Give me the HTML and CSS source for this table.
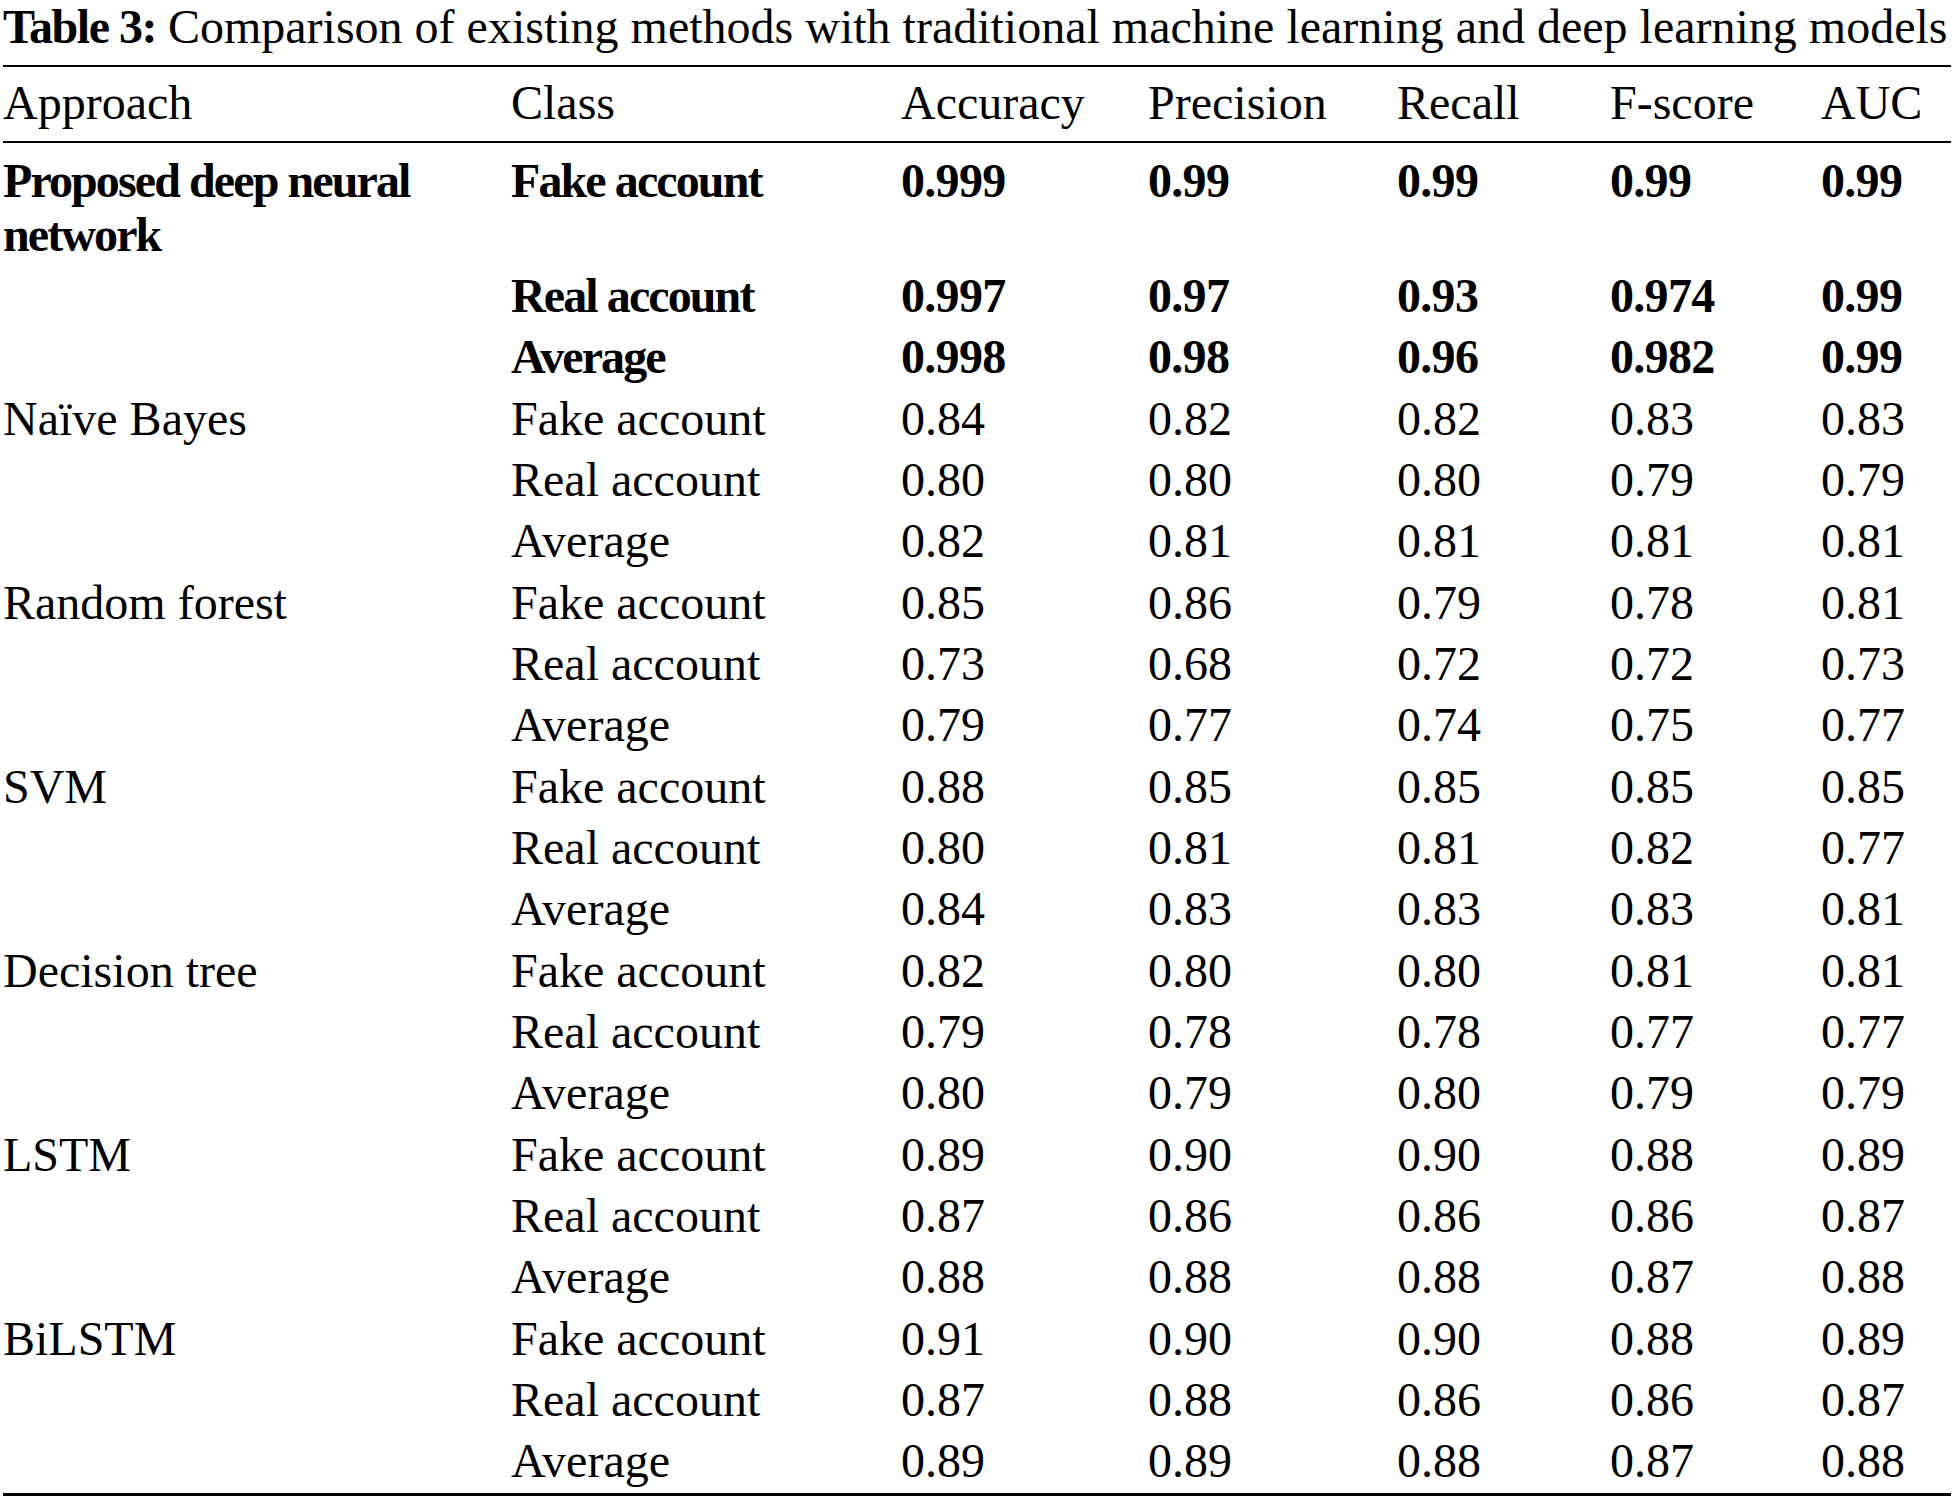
FILE: index.html
```html
<!DOCTYPE html>
<html lang="en">
<head>
<meta charset="utf-8">
<title>Table 3</title>
<link rel="stylesheet" href="styles.css">
</head>
<body>
<div class="page">
  <p class="caption"><span class="caption-label">Table 3:</span> Comparison of existing methods with traditional machine learning and deep learning models</p>
  <table class="results">
    <colgroup>
      <col class="c-approach">
      <col class="c-class">
      <col class="c-acc">
      <col class="c-prec">
      <col class="c-rec">
      <col class="c-f">
      <col class="c-auc">
    </colgroup>
    <thead>
      <tr>
        <th>Approach</th>
        <th>Class</th>
        <th>Accuracy</th>
        <th>Precision</th>
        <th>Recall</th>
        <th>F-score</th>
        <th>AUC</th>
      </tr>
    </thead>
    <tbody>
      <tr class="bold first">
        <td>Proposed deep neural network</td>
        <td>Fake account</td>
        <td>0.999</td>
        <td>0.99</td>
        <td>0.99</td>
        <td>0.99</td>
        <td>0.99</td>
      </tr>
      <tr class="bold">
        <td></td>
        <td>Real account</td>
        <td>0.997</td>
        <td>0.97</td>
        <td>0.93</td>
        <td>0.974</td>
        <td>0.99</td>
      </tr>
      <tr class="bold">
        <td></td>
        <td>Average</td>
        <td>0.998</td>
        <td>0.98</td>
        <td>0.96</td>
        <td>0.982</td>
        <td>0.99</td>
      </tr>
      <tr>
        <td>Naïve Bayes</td>
        <td>Fake account</td>
        <td>0.84</td>
        <td>0.82</td>
        <td>0.82</td>
        <td>0.83</td>
        <td>0.83</td>
      </tr>
      <tr>
        <td></td>
        <td>Real account</td>
        <td>0.80</td>
        <td>0.80</td>
        <td>0.80</td>
        <td>0.79</td>
        <td>0.79</td>
      </tr>
      <tr>
        <td></td>
        <td>Average</td>
        <td>0.82</td>
        <td>0.81</td>
        <td>0.81</td>
        <td>0.81</td>
        <td>0.81</td>
      </tr>
      <tr>
        <td>Random forest</td>
        <td>Fake account</td>
        <td>0.85</td>
        <td>0.86</td>
        <td>0.79</td>
        <td>0.78</td>
        <td>0.81</td>
      </tr>
      <tr>
        <td></td>
        <td>Real account</td>
        <td>0.73</td>
        <td>0.68</td>
        <td>0.72</td>
        <td>0.72</td>
        <td>0.73</td>
      </tr>
      <tr>
        <td></td>
        <td>Average</td>
        <td>0.79</td>
        <td>0.77</td>
        <td>0.74</td>
        <td>0.75</td>
        <td>0.77</td>
      </tr>
      <tr>
        <td>SVM</td>
        <td>Fake account</td>
        <td>0.88</td>
        <td>0.85</td>
        <td>0.85</td>
        <td>0.85</td>
        <td>0.85</td>
      </tr>
      <tr>
        <td></td>
        <td>Real account</td>
        <td>0.80</td>
        <td>0.81</td>
        <td>0.81</td>
        <td>0.82</td>
        <td>0.77</td>
      </tr>
      <tr>
        <td></td>
        <td>Average</td>
        <td>0.84</td>
        <td>0.83</td>
        <td>0.83</td>
        <td>0.83</td>
        <td>0.81</td>
      </tr>
      <tr>
        <td>Decision tree</td>
        <td>Fake account</td>
        <td>0.82</td>
        <td>0.80</td>
        <td>0.80</td>
        <td>0.81</td>
        <td>0.81</td>
      </tr>
      <tr>
        <td></td>
        <td>Real account</td>
        <td>0.79</td>
        <td>0.78</td>
        <td>0.78</td>
        <td>0.77</td>
        <td>0.77</td>
      </tr>
      <tr>
        <td></td>
        <td>Average</td>
        <td>0.80</td>
        <td>0.79</td>
        <td>0.80</td>
        <td>0.79</td>
        <td>0.79</td>
      </tr>
      <tr>
        <td>LSTM</td>
        <td>Fake account</td>
        <td>0.89</td>
        <td>0.90</td>
        <td>0.90</td>
        <td>0.88</td>
        <td>0.89</td>
      </tr>
      <tr>
        <td></td>
        <td>Real account</td>
        <td>0.87</td>
        <td>0.86</td>
        <td>0.86</td>
        <td>0.86</td>
        <td>0.87</td>
      </tr>
      <tr>
        <td></td>
        <td>Average</td>
        <td>0.88</td>
        <td>0.88</td>
        <td>0.88</td>
        <td>0.87</td>
        <td>0.88</td>
      </tr>
      <tr>
        <td>BiLSTM</td>
        <td>Fake account</td>
        <td>0.91</td>
        <td>0.90</td>
        <td>0.90</td>
        <td>0.88</td>
        <td>0.89</td>
      </tr>
      <tr>
        <td></td>
        <td>Real account</td>
        <td>0.87</td>
        <td>0.88</td>
        <td>0.86</td>
        <td>0.86</td>
        <td>0.87</td>
      </tr>
      <tr class="last">
        <td></td>
        <td>Average</td>
        <td>0.89</td>
        <td>0.89</td>
        <td>0.88</td>
        <td>0.87</td>
        <td>0.88</td>
      </tr>
    </tbody>
  </table>
</div>
</body>
</html>
```

FILE: styles.css
```css
html, body {
  margin: 0;
  padding: 0;
  background: #ffffff;
}

body {
  font-family: "Liberation Serif", "Times New Roman", Times, serif;
  font-size: 48px;
  color: #000000;
}

.page {
  padding: 0 3px 0 3px;
}

.caption {
  margin: 0 0 12px 0;
  line-height: 53px;
  white-space: nowrap;
}

.caption-label {
  font-weight: bold;
  letter-spacing: -1.5px;
}

.results {
  width: 100%;
  table-layout: fixed;
  border-collapse: collapse;
  border-top: 2px solid #000;
  border-bottom: 3px solid #000;
}

.c-approach { width: 508px; }
.c-class { width: 390px; }
.c-acc { width: 247px; }
.c-prec { width: 249px; }
.c-rec { width: 213px; }
.c-f { width: 211px; }
.c-auc { width: auto; }

.results th,
.results td {
  text-align: left;
  vertical-align: top;
  padding: 6.6px 0 0.75px 0;
  line-height: 54px;
  font-weight: normal;
}

.results thead th {
  padding: 9px 0 11px 0;
  border-bottom: 2px solid #000;
}

.results tr.bold td {
  font-weight: bold;
  letter-spacing: -0.7px;
}

.results tr.bold td:nth-child(1),
.results tr.bold td:nth-child(2) {
  letter-spacing: -1.9px;
}

.results tr.first td {
  padding-top: 10.5px;
}

.results tr.last td {
  padding-bottom: 5px;
}
```
